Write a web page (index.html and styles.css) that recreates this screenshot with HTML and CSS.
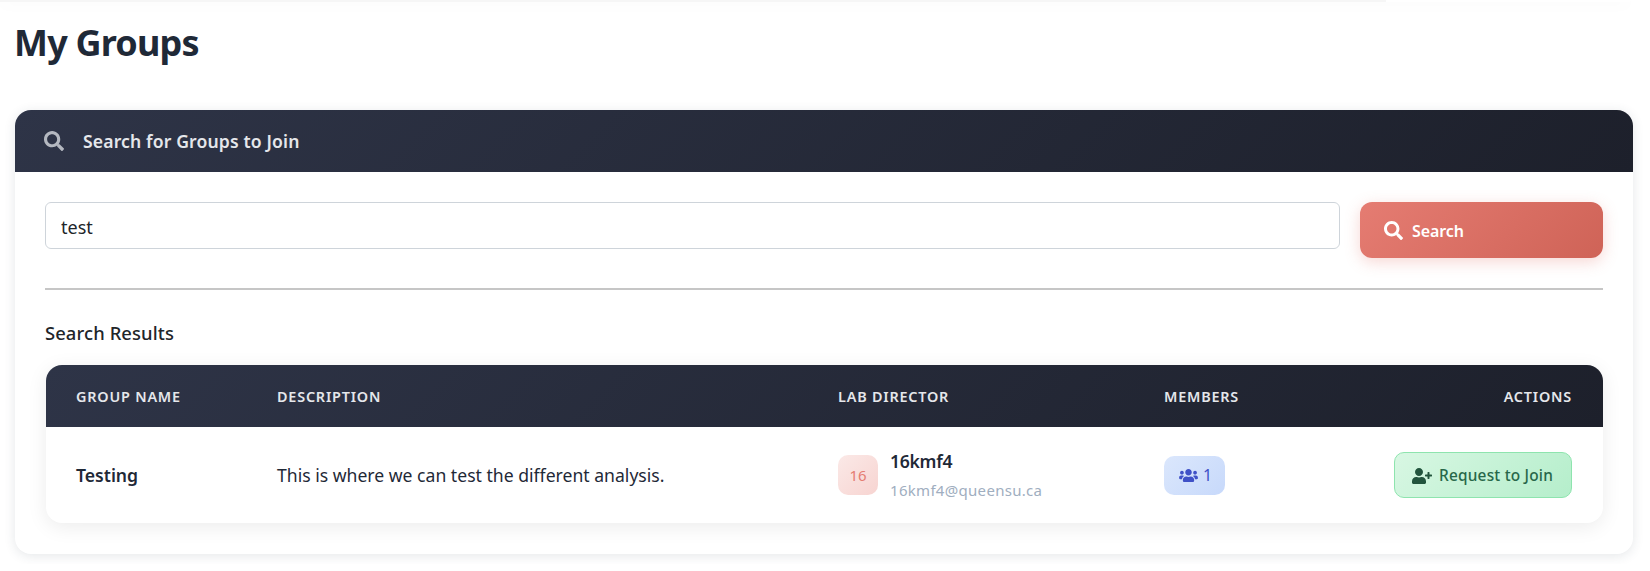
FILE: index.html
```html
<!DOCTYPE html>
<html lang="en">
<head>
  <meta charset="UTF-8" />
  <meta name="viewport" content="width=device-width, initial-scale=1" />
  <title>My Groups</title>
  <link rel="stylesheet" href="styles.css">
</head>
<body>
  <div class="topbar"><div class="topbar-tab"></div></div>

  <main class="page">
    <h1 class="page-title">My Groups</h1>

    <section class="card">
      <div class="card-header">
        <svg class="icon icon-header" viewBox="0 0 512 512"><path d="M505 442.7L405.3 343c-4.5-4.5-10.6-7-17-7H372c27.6-35.3 44-79.7 44-128C416 93.1 322.9 0 208 0S0 93.1 0 208s93.1 208 208 208c48.3 0 92.7-16.4 128-44v16.3c0 6.4 2.5 12.5 7 17l99.7 99.7c9.4 9.4 24.6 9.4 33.9 0l28.3-28.3c9.4-9.4 9.4-24.6.1-34zM208 336c-70.7 0-128-57.2-128-128 0-70.7 57.2-128 128-128 70.7 0 128 57.2 128 128 0 70.7-57.2 128-128 128z"/></svg>
        <span class="card-title">Search for Groups to Join</span>
      </div>

      <div class="card-body">
        <form class="search-row">
          <input class="search-input" type="text" value="test">
          <button class="search-btn" type="button">
            <svg class="icon" viewBox="0 0 512 512"><path d="M505 442.7L405.3 343c-4.5-4.5-10.6-7-17-7H372c27.6-35.3 44-79.7 44-128C416 93.1 322.9 0 208 0S0 93.1 0 208s93.1 208 208 208c48.3 0 92.7-16.4 128-44v16.3c0 6.4 2.5 12.5 7 17l99.7 99.7c9.4 9.4 24.6 9.4 33.9 0l28.3-28.3c9.4-9.4 9.4-24.6.1-34zM208 336c-70.7 0-128-57.2-128-128 0-70.7 57.2-128 128-128 70.7 0 128 57.2 128 128 0 70.7-57.2 128-128 128z"/></svg>
            Search
          </button>
        </form>

        <hr class="divider">

        <h2 class="results-title">Search Results</h2>

        <div class="table-wrap">
          <table class="results">
            <colgroup>
              <col class="col-name">
              <col class="col-desc">
              <col class="col-director">
              <col class="col-members">
              <col>
            </colgroup>
            <thead>
              <tr>
                <th>Group Name</th>
                <th>Description</th>
                <th>Lab Director</th>
                <th>Members</th>
                <th class="align-right">Actions</th>
              </tr>
            </thead>
            <tbody>
              <tr>
                <td class="group-name">Testing</td>
                <td>This is where we can test the different analysis.</td>
                <td>
                  <div class="director">
                    <div class="avatar">16</div>
                    <div>
                      <div class="director-name">16kmf4</div>
                      <div class="director-email">16kmf4@queensu.ca</div>
                    </div>
                  </div>
                </td>
                <td>
                  <span class="members-badge">
                    <svg class="icon icon-users" viewBox="0 0 640 512"><path d="M96 224c35.3 0 64-28.7 64-64s-28.7-64-64-64-64 28.7-64 64 28.7 64 64 64zm448 0c35.3 0 64-28.7 64-64s-28.7-64-64-64-64 28.7-64 64 28.7 64 64 64zm32 32h-64c-17.6 0-33.5 7.1-45.1 18.6 40.3 22.1 68.9 62 75.1 109.4h66c17.7 0 32-14.3 32-32v-32c0-35.3-28.7-64-64-64zm-256 0c61.9 0 112-50.1 112-112S381.9 32 320 32 208 82.1 208 144s50.1 112 112 112zm76.8 32h-8.3c-20.8 10-43.9 16-68.5 16s-47.6-6-68.5-16h-8.3C179.6 288 128 339.6 128 403.2V432c0 26.5 21.5 48 48 48h288c26.5 0 48-21.5 48-48v-28.8c0-63.6-51.6-115.2-115.2-115.2zm-223.7-13.4C161.5 263.1 145.6 256 128 256H64c-35.3 0-64 28.7-64 64v32c0 17.7 14.3 32 32 32h65.9c6.3-47.4 34.9-87.3 75.2-109.4z"/></svg>
                    1
                  </span>
                </td>
                <td class="align-right">
                  <button class="join-btn" type="button">
                    <svg class="icon icon-join" viewBox="0 0 640 512"><path d="M624 208h-64v-64c0-8.8-7.2-16-16-16h-32c-8.8 0-16 7.2-16 16v64h-64c-8.8 0-16 7.2-16 16v32c0 8.8 7.2 16 16 16h64v64c0 8.8 7.2 16 16 16h32c8.8 0 16-7.2 16-16v-64h64c8.8 0 16-7.2 16-16v-32c0-8.8-7.2-16-16-16zm-400 48c70.7 0 128-57.3 128-128S294.7 0 224 0 96 57.3 96 128s57.3 128 128 128zm89.6 32h-16.7c-22.2 10.2-46.9 16-72.9 16s-50.6-5.8-72.9-16h-16.7C60.2 288 0 348.2 0 422.4V464c0 26.5 21.5 48 48 48h352c26.5 0 48-21.5 48-48v-41.6c0-74.2-60.2-134.4-134.4-134.4z"/></svg>
                    Request to Join
                  </button>
                </td>
              </tr>
            </tbody>
          </table>
        </div>
      </div>
    </section>
  </main>
</body>
</html>
```

FILE: styles.css
```css
* {
  box-sizing: border-box;
}
html, body {
  height: 100%;
}
body {
  margin: 0;
  background: #fff;
  color: #1f2937;
  font-family: "Noto Sans", "Open Sans", Arial, sans-serif;
  overflow: hidden;
}
.icon {
  display: block;
  flex: none;
  fill: currentColor;
}

.topbar {
  position: relative;
  z-index: 2;
  display: flex;
  justify-content: flex-end;
  height: 2px;
  margin-right: 20px;
  background: #f6f6f6;
  box-shadow: 0 2px 14px rgba(0,0,0,0.07);
}
.topbar-tab {
  width: 244px;
  height: 2px;
  background: #fff;
}

.page {
  height: 562px;
  padding: 0 17px 0 15px;
  overflow: hidden;
}
.page-title {
  margin: 14px 0 0 -1px;
  height: 94px;
  font-size: 36px;
  line-height: 54px;
  font-weight: 700;
  letter-spacing: -0.8px;
  color: #1f2937;
}

.card {
  border-radius: 16px;
  background: #fff;
  box-shadow: 0 2px 12px rgba(45,55,72,0.12);
  overflow: hidden;
}
.card-header {
  display: flex;
  align-items: center;
  gap: 19px;
  height: 62px;
  padding: 0 29px;
  background: linear-gradient(135deg, #2e3447, #1d202b);
  color: #e5e7eb;
}
.icon-header {
  width: 20px;
  height: 20px;
  color: #b4b8c0;
}
.card-title {
  font-size: 17.6px;
  font-weight: 600;
  letter-spacing: 0.13px;
}
.card-body {
  padding: 30px 30px 31px 30px;
}

.search-row {
  display: flex;
  align-items: flex-start;
  gap: 20px;
}
.search-input {
  flex: 1;
  height: 47px;
  padding: 2px 15px 0;
  border: 1px solid #ced4da;
  border-radius: 6px;
  background: #fff;
  color: #212529;
  font: 400 18px "Noto Sans", sans-serif;
}
.search-btn {
  display: flex;
  align-items: center;
  gap: 9px;
  width: 243px;
  height: 56px;
  padding: 1px 24px 0;
  border: 0;
  border-radius: 12px;
  background: linear-gradient(135deg, #e57c72, #cf6357);
  box-shadow: 0 4px 15px rgba(229,124,114,0.3);
  color: #fff;
  font: 600 16px "Noto Sans", sans-serif;
  letter-spacing: -0.1px;
}
.search-btn .icon {
  width: 19px;
  height: 19px;
}

.divider {
  height: 2px;
  margin: 30px 0 0;
  border: 0;
  background: #c6c6c6;
}
.results-title {
  margin: 29px 0 19px;
  font-size: 18.4px;
  line-height: 27px;
  font-weight: 500;
  letter-spacing: 0.1px;
  color: #212529;
}

.table-wrap {
  margin-left: 1px;
  border-radius: 16px;
  background: #fff;
  box-shadow: 0 4px 20px rgba(0,0,0,0.08);
  overflow: hidden;
}
.results {
  width: 100%;
  border-collapse: collapse;
  table-layout: fixed;
}
.col-name { width: 201px; }
.col-desc { width: 561px; }
.col-director { width: 326px; }
.col-members { width: 150px; }
.results thead {
  background: linear-gradient(135deg, #2e3447, #1d202b);
}
.results th {
  height: 62px;
  padding: 0 31px 0 30px;
  text-align: left;
  color: #e5e7eb;
  font-size: 14.4px;
  font-weight: 600;
  letter-spacing: 0.8px;
  text-transform: uppercase;
}
.results td {
  height: 96px;
  padding: 0 31px 0 30px;
  font-size: 17.6px;
  color: #1f2937;
}
.results .align-right {
  text-align: right;
}
.results .group-name {
  font-weight: 600;
}

.director {
  display: flex;
  align-items: center;
  gap: 12px;
}
.avatar {
  display: flex;
  align-items: center;
  justify-content: center;
  width: 40px;
  height: 40px;
  border-radius: 10px;
  background: linear-gradient(135deg, #fbe9e7, #f7d4d1);
  color: #e57c72;
  font-size: 15px;
}
.director-name {
  margin-top: -1px;
  font-size: 17.6px;
  line-height: 26px;
  font-weight: 600;
  letter-spacing: -0.3px;
}
.director-email {
  margin-top: 5px;
  font-size: 15px;
  line-height: 22px;
  letter-spacing: 0.3px;
  color: #a0aec0;
}

.members-badge {
  display: inline-flex;
  align-items: center;
  gap: 5px;
  height: 39px;
  padding: 0 13px 0 15px;
  border-radius: 10px;
  background: linear-gradient(135deg, #dbe7fc, #c7d9fb);
  color: #3f51c7;
  font-size: 16px;
}
.icon-users {
  width: 19px;
  height: 15px;
}

.join-btn {
  display: inline-flex;
  align-items: center;
  gap: 7px;
  height: 46px;
  padding: 1px 18px 0 17px;
  border: 1px solid #8ee4ae;
  border-radius: 10px;
  background: linear-gradient(135deg, #d8f7e3, #b5eecb);
  color: #276749;
  font: 500 15.4px "Noto Sans", sans-serif;
  letter-spacing: 0.2px;
}
.icon-join {
  width: 20px;
  height: 16px;
  color: #22543d;
}
```
